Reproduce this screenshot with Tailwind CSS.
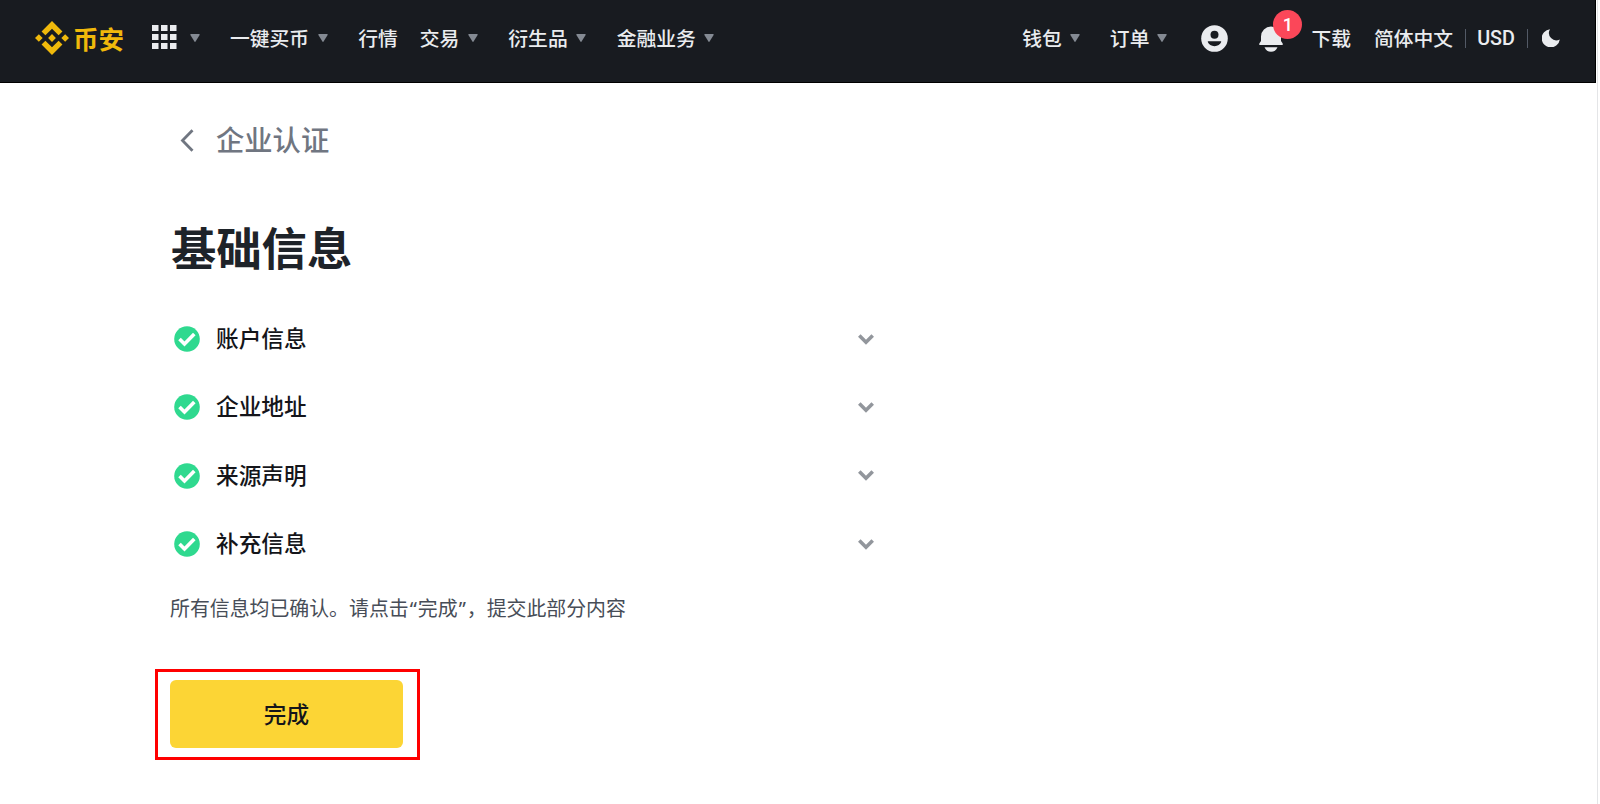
<!DOCTYPE html>
<html lang="zh-CN">
<head>
    <meta charset="UTF-8" />
    <meta name="viewport" content="width=device-width, initial-scale=1.0" />
    <title>企业认证</title>
    <script src="https://cdn.jsdelivr.net/npm/@tailwindcss/browser@4"></script>
</head>
<body class="bg-white h-[804px] overflow-hidden font-['Noto_Sans_CJK_SC',sans-serif]">

<svg class="hidden">
    <symbol id="caret" viewBox="0 0 10 8"><path d="M1 0h8q1.200 0 .6 1L5.600 7.500q-.6.8-1.200 0L.4 1Q-.2 0 1 0z" fill="currentColor" /></symbol>
    <symbol id="check" viewBox="0 0 26 26">
        <circle cx="13" cy="13" r="12.800" fill="#2fd98f" />
        <path d="M5.500 13l5 5L20.300 8" fill="none" stroke="#fff" stroke-width="3.600" />
    </symbol>
    <symbol id="chevron" viewBox="0 0 16 11"><path d="M1.300 1.600L8 8.300l6.700-6.700" fill="none" stroke="currentColor" stroke-width="3.600" /></symbol>
</svg>

<div class="w-[1598px] h-full border-r border-[#e4e5e7]">

    <!-- Header -->
    <header class="w-[1596px] h-[83px] bg-[#181b20] border-b border-r border-black text-[#eaecef] text-[19.8px] leading-[28px] font-medium whitespace-nowrap">
        <div class="flex items-center justify-between h-[76px] pl-[35px] pr-[35px]">
            <nav class="flex items-center">
                <a class="flex items-center text-[#f0b90b]">
                    <svg class="w-[34px] h-[34px]" viewBox="0 0 126.600 126.600" fill="currentColor">
                        <path d="M38.700 53.200L63.300 28.600l24.600 24.600 14.300-14.300L63.300 0 24.400 38.900zM0 63.300L14.300 49l14.300 14.300-14.300 14.300zM38.700 73.400L63.300 98l24.600-24.600 14.300 14.300-38.900 38.900-38.900-38.900zM98 63.300L112.300 49l14.300 14.300-14.300 14.300zM77.800 63.300L63.300 48.800 48.800 63.300l14.500 14.500z" />
                    </svg>
                    <span class="ml-[4px] -mt-px text-[25.500px] font-bold">币安</span>
                </a>
                <svg class="ml-[28px] -mt-[3px] w-[25px] h-[24px]" viewBox="0 0 25 24" fill="currentColor">
                    <path d="M0 0h6.500v6H0zM9 0h6.500v6H9zM18 0h6.500v6H18zM0 9h6.500v6H0zM9 9h6.500v6H9zM18 9h6.500v6H18zM0 18h6.500v6H0zM9 18h6.500v6H9zM18 18h6.500v6H18z" />
                </svg>
                <svg class="ml-[13px] w-[10px] h-[8px] text-[#848a93]"><use href="#caret" /></svg>

                <a class="ml-[30px] -mt-px">一键买币</a>
                <svg class="ml-[9px] w-[10px] h-[8px] text-[#848a93]"><use href="#caret" /></svg>
                <a class="ml-[30px] -mt-px">行情</a>
                <a class="ml-[22px] -mt-px">交易</a>
                <svg class="ml-[9px] w-[10px] h-[8px] text-[#848a93]"><use href="#caret" /></svg>
                <a class="ml-[30px] -mt-px">衍生品</a>
                <svg class="ml-[8px] w-[10px] h-[8px] text-[#848a93]"><use href="#caret" /></svg>
                <a class="ml-[31px] -mt-px">金融业务</a>
                <svg class="ml-[8px] w-[10px] h-[8px] text-[#848a93]"><use href="#caret" /></svg>
            </nav>

            <nav class="flex items-center">
                <a class="-mt-px">钱包</a>
                <svg class="ml-[8px] w-[10px] h-[8px] text-[#848a93]"><use href="#caret" /></svg>
                <a class="ml-[30px] -mt-px">订单</a>
                <svg class="ml-[8px] w-[10px] h-[8px] text-[#848a93]"><use href="#caret" /></svg>

                <svg class="ml-[34px] w-[27px] h-[27px]" viewBox="0 0 27 27">
                    <circle cx="13.500" cy="13.500" r="13.300" fill="currentColor" />
                    <circle cx="13.500" cy="9.800" r="4" fill="#181b20" />
                    <path d="M7.300 16.200h12.400q.8 0 .5.9-1.700 4.100-6.700 4.100t-6.700-4.100q-.3-.9.500-.9z" fill="#181b20" />
                </svg>

                <div class="relative ml-[31px]">
                    <svg class="w-[24px] h-[27px]" viewBox="0 0 24 27" fill="currentColor">
                        <path d="M2 11.500a10 10 0 0 1 20 0V16l1.700 2.500V20H.3v-1.500L2 16zM5.500 22.200h13Q16.500 26.700 12 26.700t-6.500-4.500z" />
                    </svg>
                    <span class="absolute -top-[15px] left-[14px] w-[29px] h-[29px] rounded-full bg-[#fb4759] text-white text-[18px] leading-[29px] text-center font-[Roboto,sans-serif]">1</span>
                </div>

                <a class="ml-[28px] -mt-px">下载</a>
                <a class="ml-[23px] -mt-px">简体中文</a>
                <span class="ml-[12px] w-px h-[19px] bg-[#535a66]"></span>
                <a class="ml-[11px] mt-[2px] font-[Roboto,sans-serif]">USD</a>
                <span class="ml-[12px] w-px h-[19px] bg-[#535a66]"></span>
                <svg class="ml-[14px] w-[18px] h-[18px]" viewBox="0 0 18 18" fill="currentColor">
                    <path d="M8 .2A9.100 9.100 0 1 0 17.800 10.500 7.400 7.400 0 0 1 8 .2z" />
                </svg>
            </nav>
        </div>
    </header>

    <!-- Business verification -->
    <main class="pl-[171px]">
        <div class="flex items-center h-[40px] mt-[37px] text-[#707681]">
            <svg class="ml-[9px] w-[14px] h-[23px]" viewBox="0 0 14 23" fill="none" stroke="currentColor" stroke-width="2.800">
                <path d="M12.500 1.300L2.500 11.500l10 10.200" />
            </svg>
            <h2 class="ml-[22px] -mt-[2px] text-[28.300px] leading-[40px] font-medium">企业认证</h2>
        </div>

        <h1 class="mt-[54px] text-[45.300px] leading-[64px] font-semibold text-[#1e2329]">基础信息</h1>

        <ul class="mt-[27px] w-[705px] text-[22.650px] font-medium text-[#14151a]">
            <li class="flex items-center h-[68.300px]">
                <svg class="ml-[3px] w-[26px] h-[26px]"><use href="#check" /></svg>
                <span class="ml-[16px] -mt-[2px] flex-1">账户信息</span>
                <svg class="mr-[2px] w-[16px] h-[11px] text-[#92969c]"><use href="#chevron" /></svg>
            </li>
            <li class="flex items-center h-[68.300px]">
                <svg class="ml-[3px] w-[26px] h-[26px]"><use href="#check" /></svg>
                <span class="ml-[16px] -mt-[2px] flex-1">企业地址</span>
                <svg class="mr-[2px] w-[16px] h-[11px] text-[#92969c]"><use href="#chevron" /></svg>
            </li>
            <li class="flex items-center h-[68.300px]">
                <svg class="ml-[3px] w-[26px] h-[26px]"><use href="#check" /></svg>
                <span class="ml-[16px] -mt-[2px] flex-1">来源声明</span>
                <svg class="mr-[2px] w-[16px] h-[11px] text-[#92969c]"><use href="#chevron" /></svg>
            </li>
            <li class="flex items-center h-[68.300px]">
                <svg class="ml-[3px] w-[26px] h-[26px]"><use href="#check" /></svg>
                <span class="ml-[16px] -mt-[2px] flex-1">补充信息</span>
                <svg class="mr-[2px] w-[16px] h-[11px] text-[#92969c]"><use href="#chevron" /></svg>
            </li>
        </ul>

        <p class="mt-[16px] -ml-px h-[28px] text-[19.900px] leading-[28px] text-[#474d57]">所有信息均已确认。请点击<span class="px-[1px] font-['Noto_Sans',sans-serif]">“</span>完成<span class="px-[1px] font-['Noto_Sans',sans-serif]">”</span>，提交此部分内容</p>

        <div class="mt-[47px] -ml-[16px] w-[265px] h-[91px] pr-[2px] pb-[2px] border-3 border-[#ff0000] flex items-center justify-center">
            <button class="w-[233px] h-[68px] rounded-[6px] bg-[#fcd535] text-[22.650px] font-medium text-[#14151a]">完成</button>
        </div>
    </main>
</div>

</body>
</html>
